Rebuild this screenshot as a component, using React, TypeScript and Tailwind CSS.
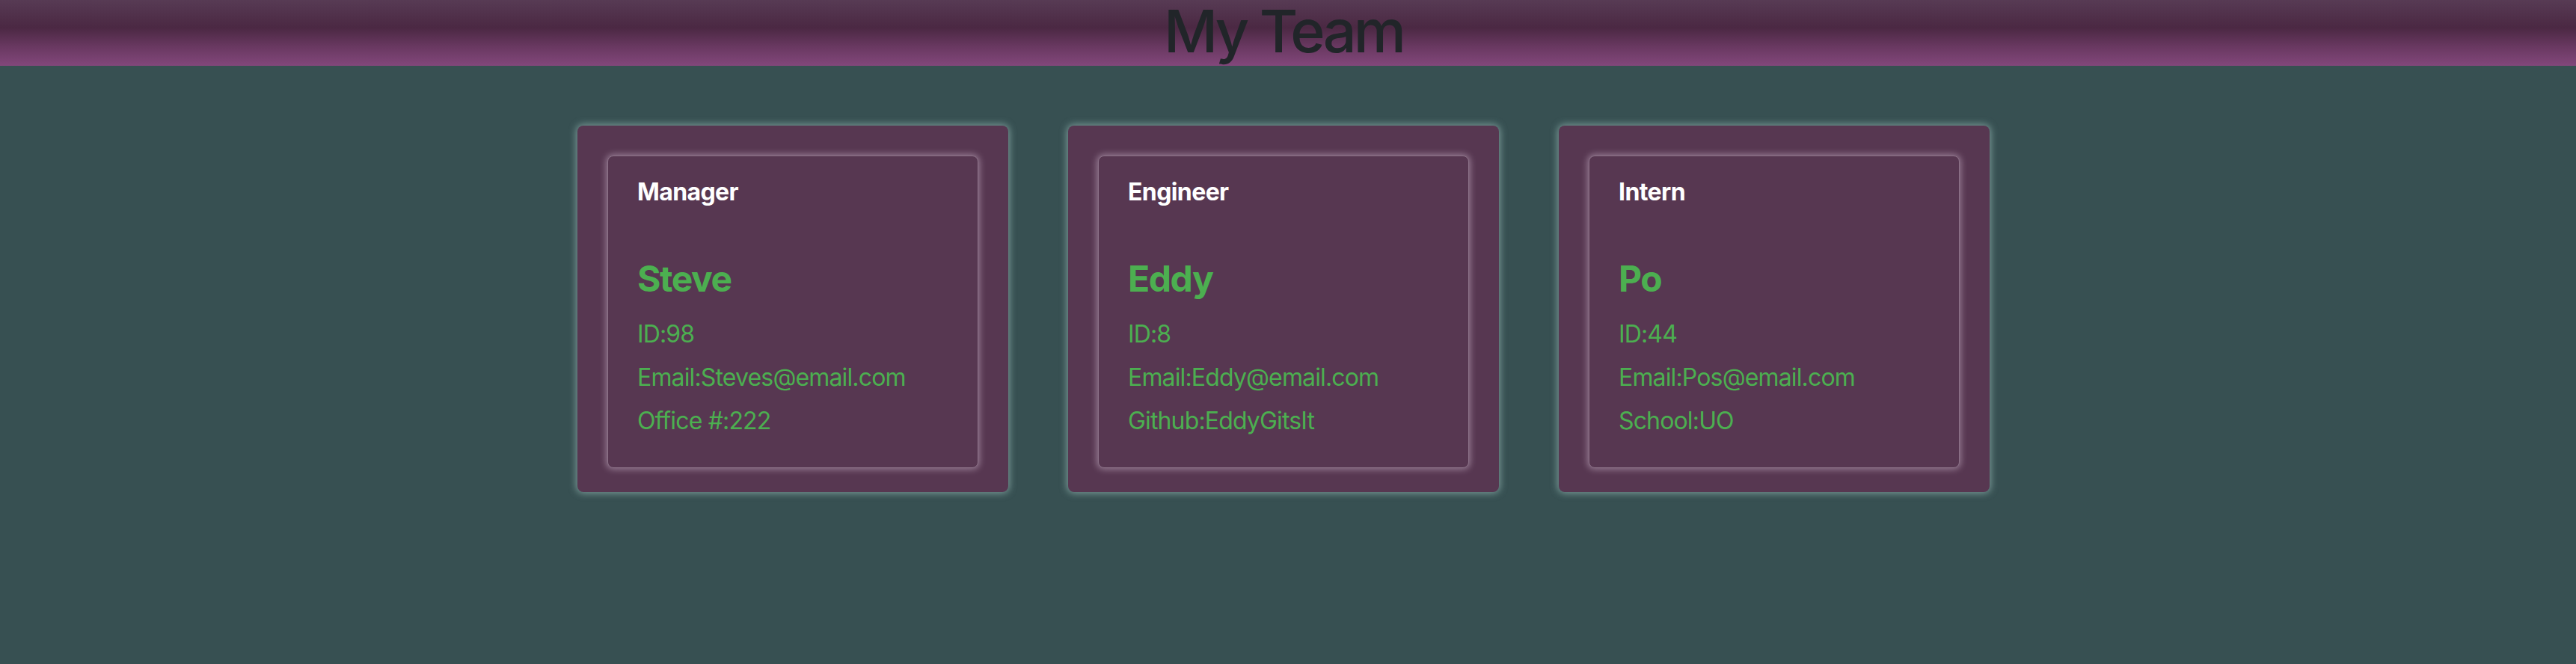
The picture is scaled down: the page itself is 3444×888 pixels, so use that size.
import React from "react";

type Member = {
  role: string;
  name: string;
  lines: string[];
};

const team: Member[] = [
  {
    role: "Manager",
    name: "Steve",
    lines: ["ID:98", "Email:Steves@email.com", "Office #:222"],
  },
  {
    role: "Engineer",
    name: "Eddy",
    lines: ["ID:8", "Email:Eddy@email.com", "Github:EddyGitsIt"],
  },
  {
    role: "Intern",
    name: "Po",
    lines: ["ID:44", "Email:Pos@email.com", "School:UO"],
  },
];

function Card({ m }: { m: Member }) {
  return (
    <div className="w-[576px] rounded-[8px] bg-[#573751] px-[40px] pt-[40px] pb-[32px] shadow-[0_0_10px_2px_rgba(170,205,200,0.55)]">
      <div className="rounded-[8px] bg-[#573751] px-[39px] pt-[28px] pb-[33px] border border-[#8c7288] shadow-[0_0_8px_2px_rgba(220,200,220,0.45)]">
        <div className="text-[32px] leading-[40px] font-bold text-white tracking-[-0.6px]">{m.role}</div>
        <div className="mt-[68px] text-[48px] leading-[56px] font-bold text-[#4caf50] tracking-[-1.4px]">{m.name}</div>
        <div className="mt-[17px]">
          {m.lines.map((l) => (
            <div key={l} className="text-[32px] leading-[58px] text-[#4caf50] tracking-[-0.85px]">
              {l}
            </div>
          ))}
        </div>
      </div>
    </div>
  );
}

export default function App() {
  return (
    <div
      className="h-[888px] overflow-hidden w-full bg-[#375052]"
      style={{ fontFamily: "Inter, 'Noto Sans', 'Liberation Sans', sans-serif" }}
    >
      <header className="h-[88px] bg-[linear-gradient(to_bottom,#573b54_0%,#4b2843_42%,#6a3962_72%,#82477b_100%)] flex justify-center items-start pr-[12px]">
        <h1 className="text-[79px] leading-[82px] font-medium text-[#212529] tracking-[-3.8px]">My Team</h1>
      </header>
      <main className="flex justify-center gap-[80px] pt-[80px] pr-[12px]">
        {team.map((m) => (
          <Card key={m.role} m={m} />
        ))}
      </main>
    </div>
  );
}
